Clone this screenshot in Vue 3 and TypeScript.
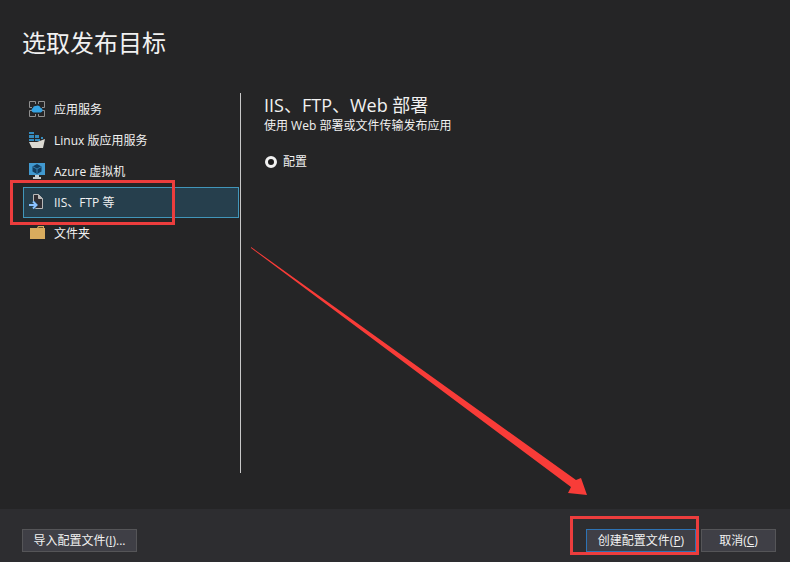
<script setup lang="ts">
import { ref } from 'vue'

type IconName = 'service' | 'linux' | 'vm' | 'iis' | 'folder'

interface Target {
  id: IconName
  label: string
}

const targets: Target[] = [
  { id: 'service', label: '应用服务' },
  { id: 'linux', label: 'Linux 版应用服务' },
  { id: 'vm', label: 'Azure 虚拟机' },
  { id: 'iis', label: 'IIS、FTP 等' },
  { id: 'folder', label: '文件夹' },
]

const selected = ref<IconName>('iis')
const mode = ref('configure')
</script>

<template>
  <div class="dialog">
    <main class="content">
      <h1 class="title">选取发布目标</h1>
      <div class="columns">
        <nav class="targets">
          <div v-for="target in targets" :key="target.id" class="row">
            <button
              type="button"
              class="target"
              :class="{ active: target.id === selected }"
              @click="selected = target.id"
            >
              <svg class="icon" viewBox="0 0 16 16" aria-hidden="true">
                <g v-if="target.id === 'service'">
                  <path
                    d="M3 6.500H.5V.5h6V3M9.500 3V.5h6v6H13M13 9.500h2.500v6h-6V13M6.500 13v2.500h-6v-6H3"
                    fill="none"
                    stroke="#909090"
                  />
                  <path
                    d="M4.500 11.500a2.300 2.300 0 0 1-.6-4.400 2.500 2.500 0 0 1 2.900-2 3 3 0 0 1 4.700 1.700 2.400 2.400 0 0 1 .3 4.700z"
                    fill="#35a3e3"
                  />
                </g>
                <g v-else-if="target.id === 'linux'">
                  <path d="M0 0h5v2H0zM0 3h5v3H0zM6 3h4v3H6zM0 7h5v2H0zM6 7h5v2H6zM12 5h2v2h-2z" fill="#358bbd" />
                  <path d="M0 10h8l8-3-2 9H3z" fill="#dbd9d2" />
                </g>
                <g v-else-if="target.id === 'vm'">
                  <path d="M0 0h16v12H0z" fill="#4199d0" />
                  <path d="m8 1 4.500 2.500v5L8 11 3.500 8.500v-5z" fill="#123c5f" />
                  <path d="m4 3.800 4 2.200 4-2.200M8 6v4.500" fill="none" stroke="#357fae" />
                  <path d="M6 12h4v2h2v2H4v-2h2z" fill="#c4ccd0" />
                </g>
                <g v-else-if="target.id === 'iis'">
                  <path d="M4.500.5h5l4 4v10h-9z" fill="#302f34" stroke="#b8b8b8" />
                  <path d="M9.500.5v4h4" fill="#b8b8b8" stroke="#b8b8b8" />
                  <path d="M3 7h3l3 4-3 4H3z" fill="#263f4d" />
                  <path d="M0 11h7M4 7.500 7.500 11 4 14.500" fill="none" stroke="#8bc1ff" stroke-width="2" />
                </g>
                <g v-else>
                  <path d="M1 3h7l1-2h6v2h1v11H1z" fill="#d9ac5e" />
                  <path d="M9.500 2.500H14" stroke="#66502d" />
                </g>
              </svg>
              <span>{{ target.label }}</span>
            </button>
            <span v-if="target.id === 'iis'" class="mark mark-target"></span>
          </div>
        </nav>
        <section class="details">
          <h2 class="heading">IIS、FTP、Web 部署</h2>
          <p class="description">使用 Web 部署或文件传输发布应用</p>
          <label class="option" for="configure">
            <input id="configure" v-model="mode" class="radio" type="radio" name="mode" value="configure" />
            <span>配置</span>
          </label>
        </section>
      </div>
    </main>
    <footer class="footer">
      <button type="button" class="action import">导入配置文件(<u>I</u>)...</button>
      <div class="confirm">
        <div class="create">
          <button type="button" class="action primary">创建配置文件(<u>P</u>)</button>
          <span class="mark mark-create"></span>
        </div>
        <button type="button" class="action cancel">取消(<u>C</u>)</button>
      </div>
    </footer>
    <svg class="arrow" viewBox="0 0 337 249" aria-hidden="true">
      <path d="M0 0 325 233 330 231 336 248 317 246 320 240 0 1z" fill="#f83c38" />
    </svg>
  </div>
</template>

<style>
body {
  margin: 0;
  background: #252526;
}
</style>

<style scoped>
.dialog {
  position: relative;
  display: flex;
  flex-direction: column;
  min-height: 100vh;
  overflow: hidden;
  background: #252526;
  color: #f1f1f1;
  font-family: "Open Sans", "Noto Sans CJK SC", sans-serif;
  font-size: 12px;
  line-height: 16px;
}

.content {
  display: flex;
  flex: 1;
  flex-direction: column;
  padding: 27px 22px 36px;
}

.title {
  margin: 0 0 34px;
  font-size: 24px;
  font-weight: 400;
  line-height: 32px;
}

.columns {
  display: flex;
  flex: 1;
}

.targets {
  box-sizing: border-box;
  flex: 0 0 219px;
  padding: 1px 1px 0;
  border-right: 1px solid #c8c8c8;
}

.row {
  position: relative;
}

.target {
  box-sizing: border-box;
  display: flex;
  align-items: center;
  gap: 9px;
  width: 100%;
  height: 31px;
  padding: 0 5px;
  border: 1px solid transparent;
  background: transparent;
  color: inherit;
  font: inherit;
  text-align: left;
}

.target.active {
  border-color: #4196ba;
  background: #263f4d;
}

.icon {
  flex: none;
  width: 16px;
  height: 16px;
  margin-bottom: 1px;
}

.details {
  flex: 1;
  padding-left: 23px;
}

.heading {
  margin: 0;
  font-size: 18px;
  font-weight: 400;
  line-height: 25px;
}

.description {
  margin: 0 0 20px;
}

.option {
  display: inline-flex;
  align-items: center;
  gap: 5px;
}

.radio {
  appearance: none;
  box-sizing: border-box;
  width: 12px;
  height: 12px;
  margin: 0 1px;
  border: 3px solid #f1f1f1;
  border-radius: 50%;
  background: #1c1c1c;
}

.footer {
  display: flex;
  align-items: flex-start;
  justify-content: space-between;
  padding: 20px 14px 10px 22px;
  background: #2d2d30;
}

.confirm {
  display: flex;
  gap: 5px;
}

.create {
  position: relative;
}

.action {
  box-sizing: border-box;
  height: 23px;
  padding: 0;
  border: 1px solid #555558;
  background: #3f3f46;
  color: inherit;
  font: inherit;
  white-space: nowrap;
}

.import {
  width: 115px;
}

.primary {
  width: 110px;
  border-color: #2d73b5;
}

.cancel {
  width: 75px;
}

.mark {
  position: absolute;
  box-sizing: border-box;
  border: 3px solid #ec3d3d;
  pointer-events: none;
}

.mark-target {
  top: -7px;
  left: -13px;
  width: 165px;
  height: 45px;
}

.mark-create {
  inset: -13px -3px -3px -16px;
}

.arrow {
  position: absolute;
  top: 247px;
  left: 251px;
  width: 337px;
  height: 249px;
  pointer-events: none;
}
</style>
